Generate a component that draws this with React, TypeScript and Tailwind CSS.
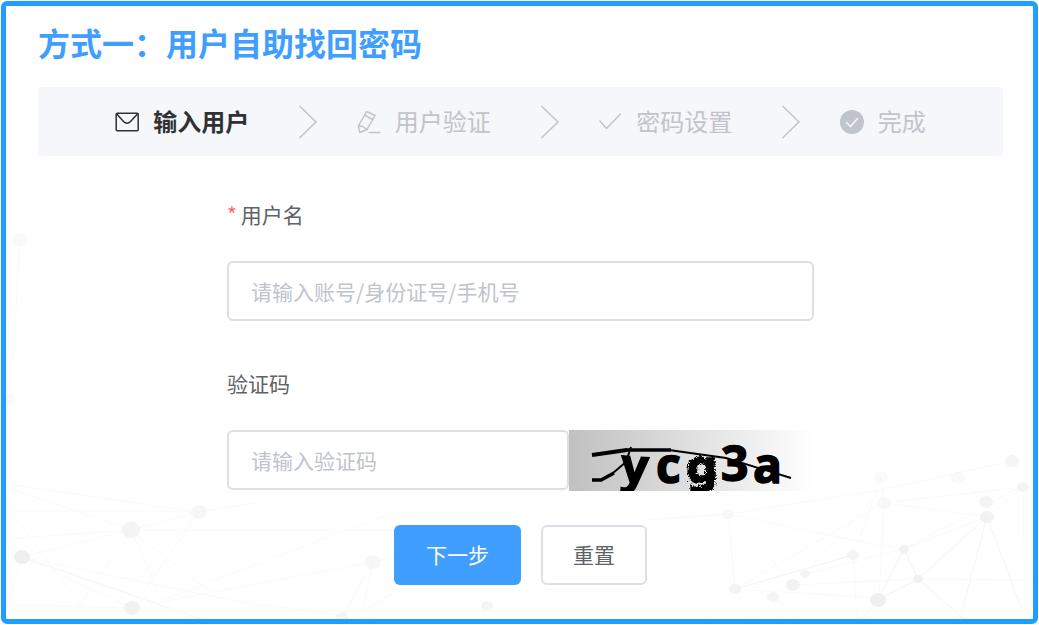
import { useState } from "react";
import type { FormEvent, ReactNode } from "react";

const nodes = [
  { x: 20, y: 240, r: 8, o: 0.4 },
  { x: 10, y: 399, r: 6, o: 0.3 },
  { x: 22, y: 557, r: 8, o: 1 },
  { x: 131, y: 530, r: 9, o: 0.7 },
  { x: 199, y: 512, r: 8, o: 0.5 },
  { x: 132, y: 608, r: 8, o: 0.8 },
  { x: 342, y: 617, r: 6, o: 0.6 },
  { x: 373, y: 562, r: 8, o: 0.5 },
  { x: 487, y: 606, r: 6, o: 0.6 },
  { x: 1012, y: 461, r: 7, o: 0.6 },
  { x: 958, y: 478, r: 7, o: 0.4 },
  { x: 1023, y: 487, r: 6, o: 0.7 },
  { x: 881, y: 477, r: 7, o: 0.3 },
  { x: 884, y: 503, r: 7, o: 0.4 },
  { x: 986, y: 502, r: 7, o: 0.7 },
  { x: 987, y: 517, r: 7, o: 0.8 },
  { x: 728, y: 514, r: 6, o: 0.4 },
  { x: 853, y: 555, r: 6, o: 0.7 },
  { x: 904, y: 549, r: 5, o: 0.8 },
  { x: 918, y: 579, r: 5, o: 0.8 },
  { x: 805, y: 574, r: 5, o: 0.7 },
  { x: 793, y: 585, r: 7, o: 0.8 },
  { x: 735, y: 589, r: 6, o: 0.7 },
  { x: 773, y: 597, r: 6, o: 0.7 },
  { x: 878, y: 600, r: 8, o: 1 },
];

function NetworkBackdrop() {
  return (
    <svg
      className="absolute inset-0 -z-10 h-full w-full"
      viewBox="6 6 1027 613"
      preserveAspectRatio="xMidYMax slice"
      aria-hidden="true"
    >
      <g fill="none" stroke="#fafafa" strokeWidth="1">
        <path d="M20 240L13 360M6 484L199 512M6 487L131 530M6 511H199M6 539L131 530M22 557L131 530L199 512L260 502M6 505L80 605M6 545L22 557L6 569M22 557L10 600M131 530L80 605M131 530L162 600M131 530L220 600M199 512L112 608M199 512L132 608M132 608L6 605M22 557L132 608M22 557L240 602L373 619" />
        <path d="M160 602L373 562L395 557M162 600L400 510M373 562L342 617M373 562L362 613L400 588M131 530H395" />
        <path d="M648 520L728 514L881 490L1012 461M728 514L735 589M728 514L785 575M728 514L853 540L904 549M881 477L884 503M884 503L1023 487M884 503L987 517M884 503L879 600M881 477L857 545M958 478L986 502M1023 487L987 517M1023 487L1025 619M735 589L853 555M735 589L884 503M805 574L904 549L987 517M904 549L1020 487M735 589L704 619M735 589L752 619M735 589L878 598M773 597L777 619M773 597L798 619M853 555L857 619M793 585L918 579L1033 580M805 574L881 490" />
      </g>
      <g fill="none" stroke="#f4f4f4" strokeWidth="1">
        <path d="M22 557L201 619M878 600L904 549L918 579L987 517L960 619M987 517L1022 610M878 600L918 579L964 619M878 600L862 619M735 589L853 555" />
      </g>
      <g fill="#efefef">
        {nodes.map((n) => (
          <ellipse
            key={`${n.x}-${n.y}`}
            cx={n.x}
            cy={n.y}
            rx={n.r}
            ry={n.r - 1}
            opacity={n.o}
          />
        ))}
      </g>
    </svg>
  );
}

function StepIcon({ children }: { children: ReactNode }) {
  return (
    <svg
      className="size-6 shrink-0"
      viewBox="0 0 24 24"
      fill="none"
      stroke="currentColor"
      strokeWidth="1.5"
      strokeLinejoin="round"
      strokeLinecap="round"
      aria-hidden="true"
    >
      {children}
    </svg>
  );
}

const steps = [
  {
    title: "输入用户",
    icon: (
      <>
        <rect x="1.200" y="3.200" width="22" height="17.500" rx="1" />
        <path d="M1.800 4L8.500 11.500Q12 15 15.500 11.500L22.500 4" />
      </>
    ),
  },
  {
    title: "用户验证",
    icon: (
      <>
        <path d="M1.500 16L9.500 1.500L18 5.500L10 19.500L2.800 22.500Z" />
        <path d="M1.500 16L5.500 16.500L10 19.500M7.500 5L15.500 9.500M12 22.500H23" />
      </>
    ),
  },
  {
    title: "密码设置",
    icon: <path d="M2 11L8.500 18.500L22.500 4" />,
  },
  {
    title: "完成",
    icon: (
      <>
        <circle cx="12" cy="12" r="12" fill="currentColor" stroke="none" />
        <path d="M6.500 12.500L10.500 16.500L17.500 8.500" stroke="#f5f7fa" />
      </>
    ),
  },
];

function Steps({ active }: { active: number }) {
  return (
    <ol className="flex items-center rounded bg-[#f5f7fa] px-[8%] pt-[17px] pb-4">
      {steps.map((step, i) => {
        const last = i === steps.length - 1;
        return (
          <li
            key={step.title}
            className={`flex items-center ${last ? "" : "flex-1"} ${
              i === active ? "font-bold text-[#303133]" : "text-[#c0c4cc]"
            }`}
          >
            <StepIcon>{step.icon}</StepIcon>
            <span className="ml-3.5 pb-0.5 text-2xl leading-[34px] whitespace-nowrap">
              {step.title}
            </span>
            {!last && (
              <span className="flex flex-1 justify-center pl-2.5 text-[#c0c4cc]">
                <svg
                  className="h-9 w-5"
                  viewBox="0 0 20 36"
                  fill="none"
                  stroke="currentColor"
                  strokeWidth="1.5"
                  aria-hidden="true"
                >
                  <path d="M1.500 2L18 18L1.500 34" />
                </svg>
              </span>
            )}
          </li>
        );
      })}
    </ol>
  );
}

function Captcha() {
  return (
    <svg
      className="h-[61px] w-[245px] shrink-0 overflow-visible"
      viewBox="0 0 245 61"
      role="img"
      aria-label="验证码"
    >
      <defs>
        <linearGradient id="captcha-bg">
          <stop offset="0" stopColor="#c0c0c0" />
          <stop offset="1" stopColor="#ffffff" />
        </linearGradient>
        <clipPath id="captcha-clip">
          <rect width="245" height="61" />
        </clipPath>
        <filter id="captcha-rough">
          <feTurbulence baseFrequency="0.4" numOctaves="1" seed="4" />
          <feDisplacementMap
            in="SourceGraphic"
            scale="5"
            xChannelSelector="R"
            yChannelSelector="G"
          />
        </filter>
      </defs>
      <rect width="245" height="61" fill="url(#captcha-bg)" />
      <g
        clipPath="url(#captcha-clip)"
        className="font-['Open_Sans',sans-serif] font-bold"
        fontSize="48"
        stroke="#000"
        strokeWidth="1.5"
      >
        <text x="52" y="53" transform="rotate(4 65 40)">y</text>
        <text x="87" y="53">c</text>
        <text
          x="115"
          y="51"
          fontSize="46"
          className="font-['DejaVu_Sans',sans-serif]"
          filter="url(#captcha-rough)"
        >
          g
        </text>
        <text x="152" y="51">3</text>
        <text x="184" y="53">a</text>
      </g>
      <g fill="none" stroke="#000">
        <path d="M23 25L58 20" strokeWidth="4" />
        <path d="M57 20H102" strokeWidth="3.500" />
        <path d="M100 20L157 28L222 48" strokeWidth="2" />
        <path d="M23 50H32L45 43" strokeWidth="3.500" />
        <path d="M44 43L57 32L62 17" strokeWidth="2" />
      </g>
    </svg>
  );
}

const labelClass = "mb-5 block text-[21px] leading-[54px] text-[#606266]";
const inputClass =
  "h-[60px] w-full min-w-0 rounded-md border-2 border-[#dcdfe6] bg-white px-[22px] text-[21px] text-[#606266] outline-none placeholder:text-[#c0c4cc] focus:border-[#409eff]";

export default function App() {
  const [username, setUsername] = useState("");
  const [code, setCode] = useState("");

  const handleSubmit = (e: FormEvent) => {
    e.preventDefault();
  };

  const handleReset = () => {
    setUsername("");
    setCode("");
  };

  return (
    <div className="bg-white p-px font-['Noto_Sans_CJK_SC',sans-serif]">
      <main className="relative isolate overflow-hidden rounded-md border-5 border-[#1e9fff] pt-3.5 pr-[30px] pb-[34px] pl-8">
        <NetworkBackdrop />

        <h1 className="mb-[22px] text-[32px] leading-[45px] font-bold text-[#409eff]">
          方式一：用户自助找回密码
        </h1>

        <Steps active={0} />

        <form
          className="mx-auto mt-[31px] w-full max-w-[587px]"
          onSubmit={handleSubmit}
        >
          <label htmlFor="username" className={labelClass}>
            <span className="mr-1 text-[#f56c6c]">*</span>
            用户名
          </label>
          <input
            id="username"
            type="text"
            required
            className={inputClass}
            placeholder="请输入账号/身份证号/手机号"
            value={username}
            onChange={(e) => setUsername(e.target.value)}
          />

          <label htmlFor="code" className={`mt-[35px] ${labelClass}`}>
            验证码
          </label>
          <div className="flex">
            <input
              id="code"
              type="text"
              className={inputClass}
              placeholder="请输入验证码"
              value={code}
              onChange={(e) => setCode(e.target.value)}
            />
            <Captcha />
          </div>

          <div className="mt-[34px] flex justify-center gap-5">
            <button
              type="submit"
              className="h-[60px] rounded-md bg-[#409eff] px-8 text-[21px] text-white"
            >
              下一步
            </button>
            <button
              type="button"
              className="h-[60px] rounded-md border-2 border-[#dcdfe6] bg-white px-[30px] text-[21px] text-[#606266]"
              onClick={handleReset}
            >
              重置
            </button>
          </div>
        </form>
      </main>
    </div>
  );
}
